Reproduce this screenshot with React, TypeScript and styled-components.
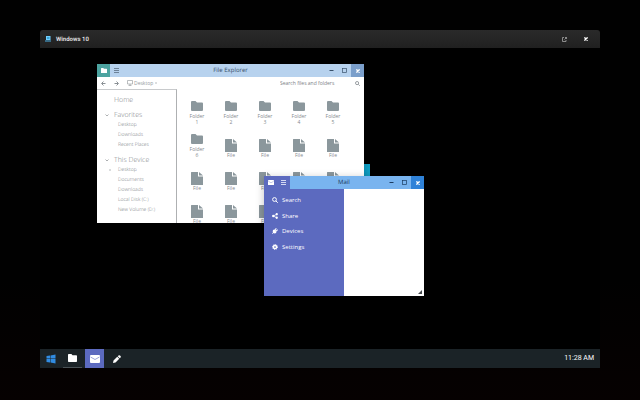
import React from "react";
import styled, { createGlobalStyle } from "styled-components";

const GlobalStyle = createGlobalStyle`
  * { box-sizing: border-box; }
  body {
    margin: 0;
    background: #030101;
    font-family: "Open Sans", "Noto Sans", sans-serif;
    text-rendering: geometricPrecision;
  }
  button, input { font: inherit; color: inherit; border: 0; padding: 0; margin: 0; background: none; }
  button { cursor: pointer; }
  svg { display: block; flex: none; }
`;

const Backdrop = styled.div`
  display: flex;
  min-height: 100vh;
  padding: 30px 40px 32px;
  background: linear-gradient(#010101 70%, #060101);
`;
const Frame = styled.main`
  display: flex;
  flex: 1;
  flex-direction: column;
  border-radius: 3px 3px 0 0;
  overflow: hidden;
  background: #000;
`;
const FrameBar = styled.header`
  display: flex;
  align-items: center;
  height: 18px;
  padding: 0 12px 0 5px;
  gap: 5px;
  background: linear-gradient(#2a2a2a, #202020);
  color: #e4e4e4;
`;
const FrameTitle = styled.h1`
  flex: 1;
  margin: 0;
  font-family: Roboto, sans-serif;
  font-size: 6px;
  font-weight: 600;
`;
const FrameButton = styled.button<{ $dim?: boolean }>`
  display: flex;
  margin-left: 12px;
  color: ${(p) => (p.$dim ? "#a5a5a5" : "#ffffff")};
`;
const Desktop = styled.div`
  position: relative;
  flex: 1;
  overflow: hidden;
`;
const HiddenWindow = styled.div`
  position: absolute;
  left: 310px;
  top: 116px;
  width: 20px;
  height: 30px;
  background: #10a2c8;
`;
const AppWindow = styled.section<{ $x: number; $y: number; $w: number; $h: number }>`
  position: absolute;
  left: ${(p) => p.$x}px;
  top: ${(p) => p.$y}px;
  width: ${(p) => p.$w}px;
  height: ${(p) => p.$h}px;
  display: flex;
  flex-direction: column;
  background: #fff;
  box-shadow: 0 2px 8px rgba(0, 0, 0, 0.25);
`;
const TitleBar = styled.header<{ $active?: boolean }>`
  display: flex;
  flex: none;
  height: 13px;
  background: ${(p) => (p.$active ? "#79b4ef" : "#b7d2ee")};
  color: ${(p) => (p.$active ? "#1c3c61" : "#38506a")};
`;
const WindowTitle = styled.h2`
  flex: 1;
  margin: 0;
  padding-left: 13px;
  font-size: 6px;
  line-height: 13px;
  font-weight: 400;
  text-align: center;
`;
const BarButton = styled.button<{ $bg?: string; $fg?: string }>`
  display: flex;
  align-items: center;
  justify-content: center;
  width: 13px;
  height: 13px;
  background: ${(p) => p.$bg ?? "transparent"};
  color: ${(p) => p.$fg ?? "inherit"};
`;
const PathBar = styled.nav`
  display: flex;
  flex: none;
  align-items: center;
  height: 12px;
  padding: 0 4px;
  font-size: 5px;
  color: #888d92;
`;
const NavButton = styled.button`
  display: flex;
  width: 13px;
  height: 12px;
  align-items: center;
  color: #8a9095;
`;
const Crumb = styled.button`
  display: flex;
  align-items: center;
  gap: 1px;
  color: #969a9e;
`;
const SearchBox = styled.label`
  display: flex;
  align-items: center;
  gap: 3px;
  margin-left: auto;
`;
const SearchInput = styled.input`
  width: 72px;
  height: 10px;
  outline: 0;
  &::placeholder { color: #7c8085; opacity: 1; }
`;
const ExplorerBody = styled.div`
  display: flex;
  flex: 1;
  min-height: 0;
`;
const Tree = styled.aside`
  flex: none;
  width: 80px;
  padding: 5px 4px 0 8px;
  border-top: 1px solid #c8cacc;
  border-right: 1px solid #aeb0b2;
  color: #8f9498;
  font-weight: 300;
`;
const TreeGroup = styled.div`
  margin-bottom: 5px;
`;
const TreeHeading = styled.h3`
  display: flex;
  align-items: center;
  height: 10px;
  margin: 0;
  font-size: 7px;
  font-weight: 300;
  color: #7e8387;
`;
const Caret = styled.span`
  width: 9px;
  flex: none;
`;
const TreeList = styled.ul`
  margin: 0;
  padding: 0;
  list-style: none;
`;
const TreeItem = styled.li`
  display: flex;
  align-items: center;
  height: 10px;
  padding-left: 3px;
  font-size: 5px;
`;
const TreeLink = styled.a`
  margin-left: 1px;
  color: #70757a;
  text-decoration: none;
`;
const Files = styled.div`
  display: grid;
  flex: 1;
  grid-template-columns: repeat(5, 34px);
  grid-auto-rows: 33px;
  align-content: start;
  align-items: end;
  padding: 3px 3px 0;
  overflow: hidden;
`;
const FileTile = styled.button`
  display: flex;
  flex-direction: column;
  align-items: center;
  color: #8b979c;
`;
const FileName = styled.span<{ $folder: boolean }>`
  width: 18px;
  margin-top: ${(p) => (p.$folder ? 2 : 0)}px;
  font-size: 5px;
  line-height: 6px;
  color: #84898e;
`;
const MailBody = styled.div`
  display: flex;
  flex: 1;
`;
const MailMenu = styled.nav`
  flex: 0 0 50%;
  padding-top: 3px;
  background: #5c6abf;
`;
const MenuList = styled.ul`
  display: grid;
  grid-template-rows: repeat(4, 1fr);
  height: 63px;
  margin: 0;
  padding: 0 8px;
  list-style: none;
`;
const MenuButton = styled.button`
  display: flex;
  align-items: center;
  gap: 4px;
  width: 100%;
  height: 100%;
  font-size: 6px;
  color: #fff;
`;
const MailContent = styled.div`
  display: flex;
  flex: 1;
  align-items: flex-end;
  justify-content: flex-end;
  padding: 2px;
`;
const Taskbar = styled.footer`
  display: flex;
  height: 19px;
  padding: 0 6px 0 1px;
  background: #1b2327;
  color: #fff;
`;
const TaskButton = styled.button<{ $state?: "open" | "active" }>`
  display: flex;
  align-items: center;
  justify-content: center;
  width: 19px;
  height: 19px;
  margin-right: 3px;
  background: ${(p) => (p.$state === "active" ? "#5c6abf" : "transparent")};
  border-bottom: ${(p) => (p.$state === "open" ? "1px solid #4a5256" : "0")};
`;
const Clock = styled.time`
  margin-left: auto;
  font-family: Roboto, sans-serif;
  font-size: 7px;
  line-height: 19px;
`;

type IconProps = { size: number; h?: number };

const Folder = ({ size, h = size }: IconProps) => (
  <svg width={size} height={h} viewBox="0 0 24 20" preserveAspectRatio="none" fill="currentColor">
    <path d="M2 0h7l3 3h10q2 0 2 2v13q0 2-2 2H2q-2 0-2-2V2q0-2 2-2z" />
  </svg>
);
const File = () => (
  <svg width="12" height="13" viewBox="0 0 24 26" fill="currentColor">
    <path d="M1 0h13v9h10v16q0 1-1 1H1q-1 0-1-1V1q0-1 1-1z" />
    <path d="M16 0l8 7h-8z" />
  </svg>
);
const Envelope = ({ size, h = size }: IconProps) => (
  <svg width={size} height={h} viewBox="0 0 20 16" preserveAspectRatio="none">
    <rect width="20" height="16" rx="2" fill="#fff" />
    <path d="M1 4l9 5 9-5" fill="none" stroke="#5c6abf" strokeWidth="1.2" />
  </svg>
);
const Bars = () => (
  <svg width="5" height="5" viewBox="0 0 10 10" stroke="currentColor" strokeWidth="2">
    <path d="M0 1h10M0 5h10M0 9h10" />
  </svg>
);
const Minimize = () => (
  <svg width="5" height="5" viewBox="0 0 10 10" stroke="currentColor" strokeWidth="2"><path d="M1 5h8" /></svg>
);
const Maximize = () => (
  <svg width="5" height="5" viewBox="0 0 10 10" fill="none" stroke="currentColor" strokeWidth="1.4"><rect x="1" y="1" width="8" height="8" /></svg>
);
const Cross = ({ size }: IconProps) => (
  <svg width={size} height={size} viewBox="0 0 10 10" stroke="currentColor" strokeWidth="3.4"><path d="M1 1l8 8M9 1L1 9" /></svg>
);
const Arrow = ({ back }: { back?: boolean }) => (
  <svg width="5" height="5" viewBox="0 0 10 10" fill="none" stroke="currentColor" strokeWidth="2">
    <path d={back ? "M9 5H2M5 1L1 5l4 4" : "M1 5h7M5 1l4 4-4 4"} />
  </svg>
);
const Monitor = () => (
  <svg width="6" height="6" viewBox="0 0 12 12" fill="none" stroke="currentColor" strokeWidth="1.3"><path d="M1 1h10v7H1zM6 8v3M3 11h6" /></svg>
);
const Chevron = ({ right }: { right?: boolean }) => (
  <svg width="4" height="4" viewBox="0 0 8 8" fill="none" stroke="currentColor" strokeWidth="1.3"><path d={right ? "M3 2l2 2-2 2" : "M1 3l3 3 3-3"} /></svg>
);
const Glass = ({ size }: IconProps) => (
  <svg width={size} height={size} viewBox="0 0 12 12" fill="none" stroke="currentColor" strokeWidth="2"><circle cx="5" cy="5" r="3.8" /><path d="M8 8l3.5 3.5" /></svg>
);
const ShareIcon = () => (
  <svg width="6" height="6" viewBox="0 0 12 12" fill="currentColor"><path d="M9.5 2.5L2.5 6l7 3.5" fill="none" stroke="currentColor" strokeWidth="1.6" /><circle cx="9.5" cy="2.5" r="2.3" /><circle cx="2.5" cy="6" r="2.4" /><circle cx="9.5" cy="9.5" r="2.3" /></svg>
);
const Plug = () => (
  <svg width="6" height="6" viewBox="0 0 12 12" fill="currentColor"><path d="M3 3l6 6q-3 3-6 1L1 12 0 11l2-2Q0 6 3 3zM4 4l4-4 1.500 1.500L7 4l1 1 2.500-2.500L12 4 8 8z" /></svg>
);
const Gear = () => (
  <svg width="6" height="6" viewBox="0 0 12 12" fill="none" stroke="currentColor"><circle cx="6" cy="6" r="3.2" strokeWidth="3" /><circle cx="6" cy="6" r="5" strokeWidth="2" strokeDasharray="2 1.93" /></svg>
);
const WindowsLogo = () => (
  <svg width="10" height="10" viewBox="0 0 20 20" fill="#318ce2"><path d="M1 4l7-1v6H1zM9 3l10-2v8H9zM1 10h7v7l-7-1zM9 10h10v9L9 17z" /></svg>
);
const Pencil = () => (
  <svg width="8" height="8" viewBox="0 0 16 16" fill="currentColor"><path d="M0 16l1-5 7.5-7.5 4 4L5 15zM9.5 2.5L11 1q1.5-1.5 3 0l1 1q1.500 1.500 0 3l-1.500 1.500z" /></svg>
);
const LaptopIcon = () => (
  <svg width="6" height="6" viewBox="0 0 12 12"><path d="M2 0h9v8H2z" fill="#70d0ff" /><path d="M4 2h5v4H4z" fill="#3ba3d9" /><path d="M0 9h12v2H0z" fill="#4bb0e5" /></svg>
);
const PopOut = () => (
  <svg width="5" height="5" viewBox="0 0 10 10" fill="none" stroke="currentColor" strokeWidth="1.6"><path d="M4 1H1v8h7V6M5 5l4-4M6 1h3v3" /></svg>
);
const Grip = () => (
  <svg width="4" height="4" viewBox="0 0 8 8" fill="#45494d"><path d="M8 0v8H0z" /></svg>
);

const WindowControls = ({ closeBg }: { closeBg: string }) => (
  <>
    <BarButton aria-label="Minimize"><Minimize /></BarButton>
    <BarButton aria-label="Maximize"><Maximize /></BarButton>
    <BarButton aria-label="Close" $bg={closeBg} $fg="#fff"><Cross size={4} /></BarButton>
  </>
);

const groups = [
  { title: "Home", items: [] as string[] },
  { title: "Favorites", items: ["Desktop", "Downloads", "Recent Places"] },
  { title: "This Device", items: ["Desktop", "Documents", "Downloads", "Local Disk (C:)", "New Volume (D:)"] },
];
const tiles = Array.from({ length: 20 }, (_, i) => (i < 6 ? `Folder ${i + 1}` : "File"));
const menu = [
  { label: "Search", icon: <Glass size={6} /> },
  { label: "Share", icon: <ShareIcon /> },
  { label: "Devices", icon: <Plug /> },
  { label: "Settings", icon: <Gear /> },
];

const Explorer = () => (
  <AppWindow $x={57} $y={16} $w={267} $h={159}>
    <TitleBar>
      <BarButton aria-label="File Explorer" $bg="#4ca3a0" $fg="#fff"><Folder size={6} h={5} /></BarButton>
      <BarButton aria-label="Menu" $fg="#6d8298"><Bars /></BarButton>
      <WindowTitle>File Explorer</WindowTitle>
      <WindowControls closeBg="#7b9fcb" />
    </TitleBar>
    <PathBar>
      <NavButton aria-label="Back"><Arrow back /></NavButton>
      <NavButton aria-label="Forward"><Arrow /></NavButton>
      <Crumb><Monitor />Desktop<Chevron right /></Crumb>
      <SearchBox>
        <SearchInput aria-label="Search files and folders" placeholder="Search files and folders" />
        <Glass size={5} />
      </SearchBox>
    </PathBar>
    <ExplorerBody>
      <Tree>
        {groups.map((g) => (
          <TreeGroup key={g.title}>
            <TreeHeading><Caret>{g.items.length > 0 && <Chevron />}</Caret>{g.title}</TreeHeading>
            <TreeList>
              {g.items.map((item, i) => (
                <TreeItem key={item}>
                  <Caret>{g.title === "This Device" && i === 0 && <Chevron right />}</Caret>
                  <TreeLink href="#">{item}</TreeLink>
                </TreeItem>
              ))}
            </TreeList>
          </TreeGroup>
        ))}
      </Tree>
      <Files>
        {tiles.map((name, i) => (
          <FileTile key={i}>
            {name === "File" ? <File /> : <Folder size={12} h={10} />}
            <FileName $folder={name !== "File"}>{name}</FileName>
          </FileTile>
        ))}
      </Files>
    </ExplorerBody>
  </AppWindow>
);

const Mail = () => (
  <AppWindow $x={224} $y={128} $w={160} $h={120}>
    <TitleBar $active>
      <BarButton aria-label="Mail" $bg="#5c6abf"><Envelope size={6} h={5} /></BarButton>
      <BarButton aria-label="Menu" $bg="#5c6abf" $fg="#d4d8f2"><Bars /></BarButton>
      <WindowTitle>Mail</WindowTitle>
      <WindowControls closeBg="#2f82d8" />
    </TitleBar>
    <MailBody>
      <MailMenu>
        <MenuList>
          {menu.map((m) => (
            <li key={m.label}><MenuButton>{m.icon}{m.label}</MenuButton></li>
          ))}
        </MenuList>
      </MailMenu>
      <MailContent><Grip /></MailContent>
    </MailBody>
  </AppWindow>
);

export default function App() {
  return (
    <>
      <GlobalStyle />
      <Backdrop>
        <Frame>
          <FrameBar>
            <LaptopIcon />
            <FrameTitle>Windows 10</FrameTitle>
            <FrameButton $dim aria-label="Open in new window"><PopOut /></FrameButton>
            <FrameButton aria-label="Close"><Cross size={4} /></FrameButton>
          </FrameBar>
          <Desktop>
            <HiddenWindow />
            <Explorer />
            <Mail />
          </Desktop>
          <Taskbar>
            <TaskButton aria-label="Start"><WindowsLogo /></TaskButton>
            <TaskButton aria-label="File Explorer" $state="open"><Folder size={9} h={8} /></TaskButton>
            <TaskButton aria-label="Mail" $state="active"><Envelope size={10} h={8} /></TaskButton>
            <TaskButton aria-label="Notes"><Pencil /></TaskButton>
            <Clock>11:28 AM</Clock>
          </Taskbar>
        </Frame>
      </Backdrop>
    </>
  );
}
